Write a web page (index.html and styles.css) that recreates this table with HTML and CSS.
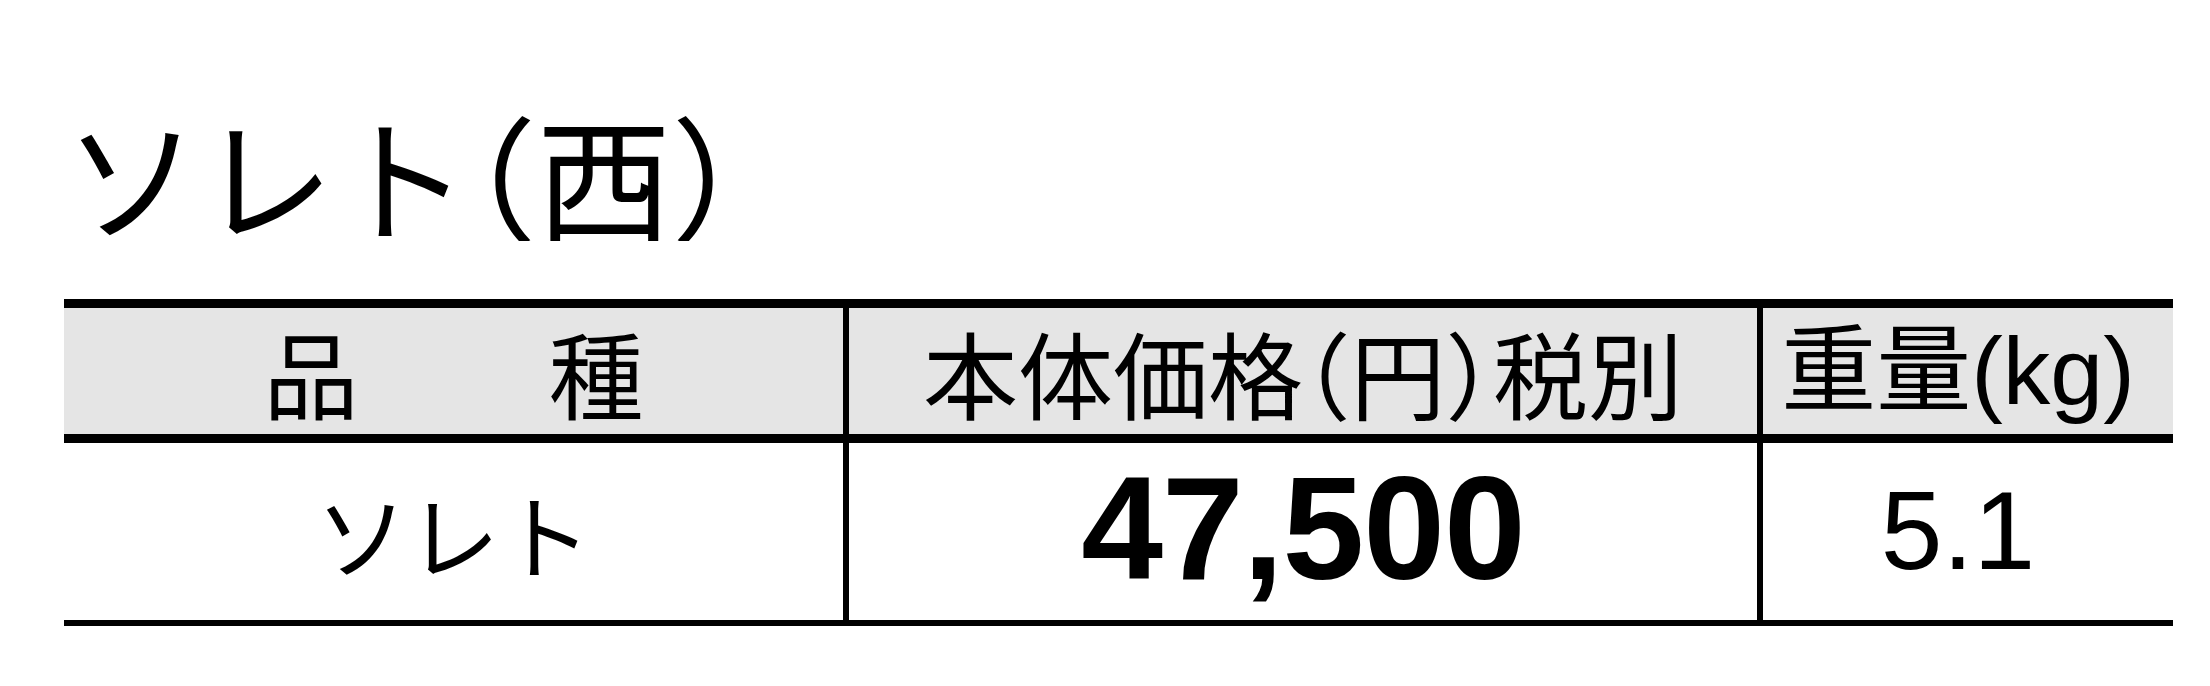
FILE: index.html
```html
<!DOCTYPE html>
<html lang="ja">
<head>
<meta charset="utf-8">
<title>ソレト（西）</title>
<link rel="stylesheet" href="styles.css">
</head>
<body>
<div class="page">
  <h1 class="title">ソレト（西）</h1>
  <div class="spec" role="table">
    <div class="cell head c1" role="columnheader">品　　種</div>
    <div class="cell head c2" role="columnheader">本体価格（円）税別</div>
    <div class="cell head c3 latin" role="columnheader">重量(kg)</div>
    <div class="cell row c1" role="cell">ソレト</div>
    <div class="cell row c2 price" role="cell">47,500</div>
    <div class="cell row c3 weight" role="cell">5.1</div>
  </div>
</div>
</body>
</html>
```

FILE: styles.css
```css
html, body {
  margin: 0;
  padding: 0;
  background: #ffffff;
  color: #000000;
}

.page {
  padding: 106px 0 0 64px;
  font-family: "Noto Sans CJK JP", sans-serif;
}

.title {
  margin: 0 0 58px 0;
  height: 135px;
  overflow: hidden;
  font-size: 135px;
  line-height: 135px;
  font-weight: 400;
  font-feature-settings: "halt";
  white-space: nowrap;
}

.spec {
  display: grid;
  grid-template-columns: 779px 914px 416px;
  grid-template-rows: 144px 183px;
}

.cell {
  box-sizing: border-box;
  display: flex;
  align-items: center;
  justify-content: center;
  white-space: nowrap;
}

.head {
  background: #e5e5e5;
  border-top: 9px solid #000;
  border-bottom: 9px solid #000;
  font-size: 95px;
  line-height: 1;
  font-feature-settings: "halt";
}

.row {
  border-bottom: 6px solid #000;
  font-size: 92px;
  line-height: 1;
}

.c2, .c3 {
  border-left: 6px solid #000;
}

.c3 {
  padding-right: 20px;
}

.latin {
  font-family: "Liberation Sans", "Noto Sans CJK JP", sans-serif;
}

.price {
  font-family: "Liberation Sans", Arial, sans-serif;
  font-weight: 700;
  font-size: 147px;
  letter-spacing: -1px;
  padding-bottom: 6px;
}

.weight {
  font-family: "Liberation Sans", Arial, sans-serif;
  font-size: 111px;
}
```
